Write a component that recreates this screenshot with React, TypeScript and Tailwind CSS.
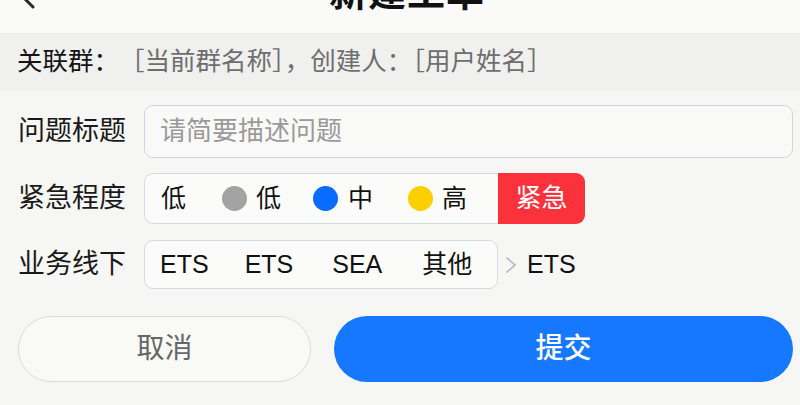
import React from "react";

const FONT = { fontFamily: '"Liberation Sans", "Noto Sans CJK SC", sans-serif' };

function Dot({ color }: { color: string }) {
  return <span className={`inline-block w-[25px] h-[25px] rounded-full ${color}`} />;
}

export default function App() {
  return (
    <div
      className="w-[800px] h-[405px] overflow-hidden bg-[#f6f6f4] flex flex-col"
      style={FONT}
    >
      {/* header (partly scrolled off the top) */}
      <div className="h-[80px] -mt-[47px] shrink-0 bg-[#fafaf9] flex items-center relative">
        <svg
          width="20"
          height="34"
          viewBox="0 0 20 34"
          className="ml-[16px] shrink-0"
          fill="none"
          stroke="#2b2b2b"
          strokeWidth="3"
          strokeLinecap="round"
          strokeLinejoin="round"
        >
          <polyline points="17,3 3,17 17,31" />
        </svg>
        <div className="flex-1 flex justify-center pr-[22px]">
          <span className="text-[38px] font-bold text-[#111] tracking-[1px]">新建工单</span>
        </div>
      </div>

      {/* info bar */}
      <div className="h-[58px] shrink-0 bg-[#f0f0ee] flex items-center pl-[17px] text-[25.5px] leading-none">
        <span className="text-[#151515]">关联群：</span>
        <span className="text-[#6e6e6e]">［当前群名称］，创建人：［用户姓名］</span>
      </div>

      {/* form */}
      <div className="flex flex-col pl-[18px] pr-[7px] pt-[14px]">
        <div className="flex items-center">
          <div className="w-[126px] text-[27px] text-[#1a1a1a] leading-none">问题标题</div>
          <div className="flex-1 h-[53px] border-[1.5px] border-[#cfd6e1] rounded-[9px] bg-[#f9f9f8] flex items-center pl-[15px] text-[26px] text-[#9a9a9a]">
            请简要描述问题
          </div>
        </div>

        <div className="flex items-center mt-[15px]">
          <div className="w-[126px] text-[27px] text-[#1a1a1a] leading-none">紧急程度</div>
          <div className="flex h-[51px]">
            <div className="w-[354px] border-[1.5px] border-r-0 border-[#d5dbe3] rounded-l-[9px] bg-[#fbfbfa] flex items-center pl-[16px] text-[25px] text-[#111]">
              <span>低</span>
              <span className="ml-[36px] flex"><Dot color="bg-[#a3a3a3]" /></span>
              <span className="ml-[9px]">低</span>
              <span className="ml-[32px] flex"><Dot color="bg-[#0a6cff]" /></span>
              <span className="ml-[10px]">中</span>
              <span className="ml-[35px] flex"><Dot color="bg-[#fcd000]" /></span>
              <span className="ml-[9px]">高</span>
            </div>
            <div className="w-[87px] bg-[#fb313c] rounded-r-[9px] flex items-center justify-center text-[26px] text-white">
              紧急
            </div>
          </div>
        </div>

        <div className="flex items-center mt-[16px]">
          <div className="w-[126px] text-[27px] text-[#1a1a1a] leading-none">业务线下</div>
          <div className="w-[354px] h-[49px] border-[1.5px] border-[#d5dbe3] rounded-[9px] bg-[#fbfbfa] flex items-center pl-[15px] text-[25px] text-[#111]">
            <span>ETS</span>
            <span className="ml-[36px]">ETS</span>
            <span className="ml-[39px]">SEA</span>
            <span className="ml-[40px]">其他</span>
          </div>
          <svg width="12" height="18" viewBox="0 0 12 18" className="ml-[7px]" fill="none" stroke="#bdbdbd" strokeWidth="1.8" strokeLinecap="round" strokeLinejoin="round">
            <polyline points="2,2 10,9 2,16" />
          </svg>
          <span className="ml-[10px] text-[25px] text-[#111]">ETS</span>
        </div>
      </div>

      {/* buttons */}
      <div className="flex pl-[18px] pr-[7px] mt-[27px] gap-[23px]">
        <button className="w-[293px] h-[66px] rounded-full border-[1.5px] border-[#dcdcdc] bg-[#f9f9f8] text-[28px] text-[#666]">
          取消
        </button>
        <button className="flex-1 h-[66px] rounded-full bg-[#1677ff] text-[28px] text-white font-medium">
          提交
        </button>
      </div>
    </div>
  );
}
